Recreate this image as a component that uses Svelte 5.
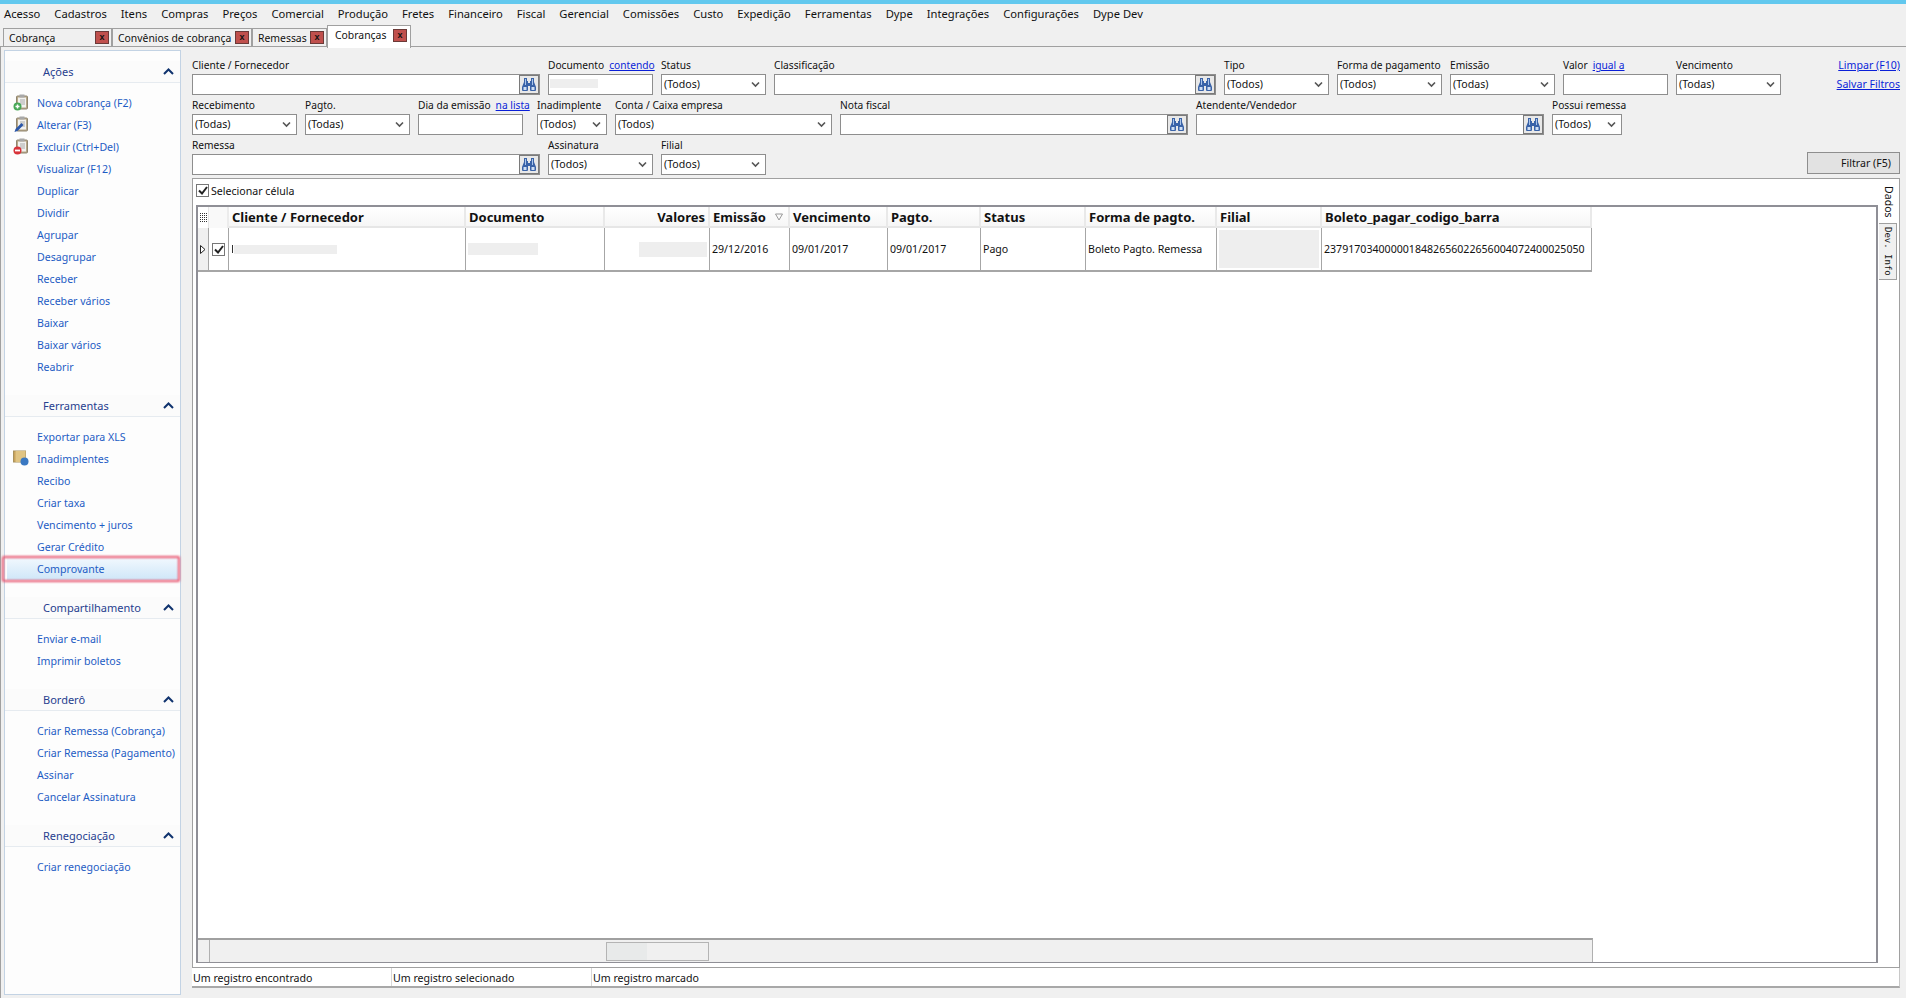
<script>
  const menu = ["Acesso","Cadastros","Itens","Compras","Preços","Comercial","Produção","Fretes","Financeiro","Fiscal","Gerencial","Comissões","Custo","Expedição","Ferramentas","Dype","Integrações","Configurações","Dype Dev"];
  const tabs = [
    { label: "Cobrança", w: 109 },
    { label: "Convênios de cobrança", w: 140 },
    { label: "Remessas", w: 75 },
    { label: "Cobranças", w: 84, active: true },
  ];
  const sections = [
    { title: "Ações", items: [
      { t: "Nova cobrança (F2)", icon: "add" }, { t: "Alterar (F3)", icon: "edit" }, { t: "Excluir (Ctrl+Del)", icon: "del" },
      { t: "Visualizar (F12)" }, { t: "Duplicar" }, { t: "Dividir" }, { t: "Agrupar" }, { t: "Desagrupar" }, { t: "Receber" },
      { t: "Receber vários" }, { t: "Baixar" }, { t: "Baixar vários" }, { t: "Reabrir" } ] },
    { title: "Ferramentas", items: [
      { t: "Exportar para XLS" }, { t: "Inadimplentes", icon: "folder" }, { t: "Recibo" }, { t: "Criar taxa" },
      { t: "Vencimento + juros" }, { t: "Gerar Crédito" }, { t: "Comprovante", hot: true } ] },
    { title: "Compartilhamento", items: [{ t: "Enviar e-mail" }, { t: "Imprimir boletos" }] },
    { title: "Borderô", items: [{ t: "Criar Remessa (Cobrança)" }, { t: "Criar Remessa (Pagamento)" }, { t: "Assinar" }, { t: "Cancelar Assinatura" }] },
    { title: "Renegociação", items: [{ t: "Criar renegociação" }] },
  ];
  const row1 = [
    { label: "Cliente / Fornecedor", w: 348, kind: "search" },
    { label: "Documento", link: "contendo", w: 105, kind: "input", mask: true },
    { label: "Status", w: 105, kind: "select", value: "(Todos)" },
    { label: "Classificação", w: 442, kind: "search" },
    { label: "Tipo", w: 105, kind: "select", value: "(Todos)" },
    { label: "Forma de pagamento", w: 105, kind: "select", value: "(Todos)" },
    { label: "Emissão", w: 105, kind: "select", value: "(Todas)" },
    { label: "Valor", link: "igual a", w: 105, kind: "input" },
    { label: "Vencimento", w: 105, kind: "select", value: "(Todas)" },
  ];
  const row2 = [
    { label: "Recebimento", w: 105, kind: "select", value: "(Todas)" },
    { label: "Pagto.", w: 105, kind: "select", value: "(Todas)" },
    { label: "Dia da emissão", link: "na lista", w: 105, kind: "input" },
    { label: "Inadimplente", w: 70, kind: "select", value: "(Todos)", ml: 6 },
    { label: "Conta / Caixa empresa", w: 217, kind: "select", value: "(Todos)" },
    { label: "Nota fiscal", w: 348, kind: "search" },
    { label: "Atendente/Vendedor", w: 348, kind: "search" },
    { label: "Possui remessa", w: 70, kind: "select", value: "(Todos)" },
  ];
  const row3 = [
    { label: "Remessa", w: 348, kind: "search" },
    { label: "Assinatura", w: 105, kind: "select", value: "(Todos)" },
    { label: "Filial", w: 105, kind: "select", value: "(Todos)" },
  ];
  const columns = [
    { t: "Cliente / Fornecedor", w: 237 }, { t: "Documento", w: 139 }, { t: "Valores", w: 105, right: true },
    { t: "Emissão", w: 80, sort: true }, { t: "Vencimento", w: 98 }, { t: "Pagto.", w: 93 }, { t: "Status", w: 105 },
    { t: "Forma de pagto.", w: 131 }, { t: "Filial", w: 105 }, { t: "Boleto_pagar_codigo_barra", w: 270 },
  ];
  const cells = [
    { name: true }, { mask: "doc" }, { mask: "val" }, { t: "29/12/2016" }, { t: "09/01/2017" }, { t: "09/01/2017" },
    { t: "Pago" }, { t: "Boleto Pagto. Remessa" }, { mask: "fil" }, { t: "2379170340000018482656022656004072400025050" },
  ];
</script>

{#snippet binoculars()}
  <span class="binoc">
    <svg width="16" height="15" viewBox="0 0 16 15">
      <path d="M3 1h3v3h1v2h2V4h1V1h3v4l2 5v3a1 1 0 0 1-1 1h-4a1 1 0 0 1-1-1V9H7v4a1 1 0 0 1-1 1H2a1 1 0 0 1-1-1v-3l2-5z" fill="#3a63a8"/>
      <rect x="2.5" y="10" width="3" height="3" fill="#cfdff4"/>
      <rect x="10.5" y="10" width="3" height="3" fill="#cfdff4"/>
      <rect x="4" y="2" width="1" height="6" fill="#a9c4ea"/>
      <rect x="11" y="2" width="1" height="6" fill="#a9c4ea"/>
    </svg>
  </span>
{/snippet}

{#snippet checkbox()}
  <span class="check">
    <svg width="10" height="9" viewBox="0 0 10 9"><path d="M1 4.5l3 3L9 1" fill="none" stroke="#222" stroke-width="2"/></svg>
  </span>
{/snippet}

{#snippet field(f)}
  <div class="field" style="width:{f.w}px;margin-left:{f.ml ?? 0}px">
    <div class="label"><span>{f.label}</span>{#if f.link}<a href="#top">{f.link}</a>{/if}</div>
    {#if f.kind === "select"}
      <div class="box select">
        <span>{f.value}</span>
        <svg width="9" height="7" viewBox="0 0 9 7"><path d="M1 1.5l3.5 3.5L8 1.5" fill="none" stroke="#555" stroke-width="1.6"/></svg>
      </div>
    {:else if f.kind === "search"}
      <div class="box search">{@render binoculars()}</div>
    {:else}
      <div class="box">{#if f.mask}<span class="mask-doc"></span>{/if}</div>
    {/if}
  </div>
{/snippet}

{#snippet clipboard(kind)}
  <svg class="ico" width="17" height="17" viewBox="0 0 17 17">
    <rect x="3.5" y="2" width="11" height="13" rx="1" fill="#b8a888" stroke="#8f8570"/>
    <rect x="5" y="3.5" width="8" height="10" fill="#f2f2f0"/>
    <rect x="6.5" y="0.5" width="5" height="3" fill="#a8a8a8"/>
    <path d="M7 6h5M7 8h5M7 10h5" stroke="#aaa"/>
    {#if kind === "add"}
      <circle cx="4.5" cy="12.5" r="4" fill="#48a857"/><path d="M2.5 12.5h4M4.5 10.5v4" stroke="#fff" stroke-width="1.5"/>
    {:else if kind === "del"}
      <circle cx="4.5" cy="12.5" r="4" fill="#d8333a"/><path d="M2 12.5h5" stroke="#fff" stroke-width="1.8"/>
    {:else}
      <path d="M1.5 16l1-3 6-6 2 2-6 6z" fill="#2a56a8"/>
    {/if}
  </svg>
{/snippet}

<div class="strip" id="top"></div>
<nav class="menu">
  {#each menu as m}<span>{m}</span>{/each}
</nav>
<div class="tabs">
  {#each tabs as tab}
    <div class="tab" class:active={tab.active} style="width:{tab.w}px">
      <span>{tab.label}</span>
      <b class="close">x</b>
    </div>
  {/each}
</div>

<div class="body">
  <aside class="side">
    {#each sections as s}
      <section>
        <header>
          <span>{s.title}</span>
          <svg width="11" height="7" viewBox="0 0 11 7"><path d="M1 6l4.5-4.5L10 6" fill="none" stroke="#10336e" stroke-width="2"/></svg>
        </header>
        <ul>
          {#each s.items as item}
            <li class:hot={item.hot}>
              {#if item.icon === "folder"}
                <svg class="ico" width="16" height="16" viewBox="0 0 16 16">
                  <rect x="0.5" y="1" width="12" height="11" fill="#c9a35c" stroke="#a8925e"/>
                  <rect x="2.5" y="1" width="10" height="11" fill="#e0c483"/>
                  <circle cx="11.5" cy="11.5" r="4" fill="#3a78c2"/>
                </svg>
              {:else if item.icon}
                {@render clipboard(item.icon)}
              {/if}
              {item.t}
            </li>
          {/each}
        </ul>
      </section>
    {/each}
  </aside>

  <main class="main">
    <div class="row">
      {#each row1 as f}{@render field(f)}{/each}
      <div class="actions"><a href="#top">Limpar (F10)</a><a href="#top">Salvar Filtros</a></div>
    </div>
    <div class="row">
      {#each row2 as f}{@render field(f)}{/each}
    </div>
    <div class="row">
      {#each row3 as f}{@render field(f)}{/each}
      <button class="filter">Filtrar (F5)</button>
    </div>

    <div class="panel">
      <div class="content">
        <div class="selector">{@render checkbox()}<span>Selecionar célula</span></div>
        <div class="grid">
          <div class="table">
            <div class="thead">
              <div class="c-ind head-ind">
                <svg width="7" height="9" viewBox="0 0 7 9"><path d="M0 .5h7M0 2.5h7M0 4.5h7M0 6.5h7M0 8.5h7" stroke="#333" stroke-dasharray="1 1"/></svg>
              </div>
              <div class="c-chk head-chk"></div>
              {#each columns as col}
                <div class="th" class:right={col.right} style="width:{col.w}px">
                  {col.t}
                  {#if col.sort}
                    <svg class="sort" width="8" height="8" viewBox="0 0 8 8"><path d="M.5 1h7L4 7z" fill="none" stroke="#999"/></svg>
                  {/if}
                </div>
              {/each}
            </div>
            <div class="tr">
              <div class="c-ind">
                <svg width="6" height="9" viewBox="0 0 6 9"><path d="M.5.5l4.5 4-4.5 4z" fill="#fff" stroke="#222"/></svg>
              </div>
              <div class="c-chk">{@render checkbox()}</div>
              {#each cells as cell, i}
                <div class="td" style="width:{columns[i].w}px">
                  {#if cell.name}
                    <i class="cut"></i><span class="mask m-name"></span>
                  {:else if cell.mask}
                    <span class="mask m-{cell.mask}"></span>
                  {:else}
                    {cell.t}
                  {/if}
                </div>
              {/each}
            </div>
          </div>
          <div class="hscroll">
            <div class="hs-btn"></div>
            <div class="thumb"></div>
          </div>
        </div>
      </div>
      <div class="vtabs">
        <div class="vtab on">Dados</div>
        <div class="vtab dev">Dev. Info</div>
      </div>
    </div>

    <footer class="status">
      <span>Um registro encontrado</span>
      <span>Um registro selecionado</span>
      <span class="last">Um registro marcado</span>
    </footer>
  </main>
</div>

<style>
  :global(body) {
    margin: 0;
    background: #f0f0f0;
    color: #111;
    font: 10.6px "Noto Sans", "Open Sans", sans-serif;
    overflow: hidden;
  }
  a { color: #0a1fd8; text-decoration: underline; }
  .strip { height: 4px; background: #62c8ee; }
  .menu { display: flex; gap: 14px; height: 18px; margin-bottom: 4px; align-items: center; padding-left: 4px; font-size: 11.2px; }
  .tabs { display: flex; height: 20px; padding-left: 3px; border-bottom: 1px solid #a0a0a0; align-items: flex-end; }
  .tab {
    box-sizing: border-box; height: 18px; display: flex; align-items: center; justify-content: space-between;
    padding: 0 2px 0 5px; border: 1px solid #a0a0a0; border-bottom: 0; font-size: 10.4px; white-space: nowrap;
  }
  .tab.active { height: 23px; margin-bottom: -2px; background: #fff; padding: 0 3px 4px 7px; position: relative; }
  .close {
    box-sizing: border-box; width: 14px; height: 13px; background: #c0504d; border: 1px solid #6b3a38;
    color: #111; font: bold 9px/10px "Liberation Sans", sans-serif; text-align: center;
  }
  .body { display: flex; height: 951px; border-left: 1px solid #a0a0a0; box-sizing: border-box; }
  .side {
    box-sizing: border-box; width: 177px; height: 945px; margin: 3px 0 0 3px; padding-top: 10px;
    background: #fdfdfd; border: 1px solid #c3d3e4; color: #1d5cc4;
  }
  .side header {
    box-sizing: border-box; height: 22px; display: flex; align-items: center; padding-left: 38px;
    position: relative; color: #27408f; background: #fbfbfb; border-bottom: 1px solid #e6ebf0;
    font-size: 11px;
  }
  .side header svg { position: absolute; right: 6px; top: 7px; }
  .side ul { list-style: none; margin: 0; padding: 9px 0 17px; }
  .side li { height: 22px; line-height: 22px; padding-left: 32px; position: relative; white-space: nowrap; }
  .ico { position: absolute; left: 8px; top: 2px; }
  .hot { background: linear-gradient(#f1f8fe, #cfe6f8); margin: 0 2px; padding-left: 30px !important; }
  .hot::after {
    content: ""; position: absolute; inset: -2px -2px -2px -5px;
    border: 2px solid #e8506c; border-radius: 2px; filter: blur(0.8px);
  }
  .main { flex: 1; margin-left: 11px; padding: 11px 6px 0 0; min-width: 0; }
  .row { display: flex; gap: 8px; height: 40px; position: relative; }
  .label { height: 16px; line-height: 15px; font-size: 10.2px; display: flex; gap: 5px; white-space: nowrap; }
  .box {
    box-sizing: border-box; height: 21px; background: #fff; border: 1px solid #8e8e8e; line-height: 19px;
    position: relative;
  }
  .select { display: flex; align-items: center; justify-content: space-between; padding: 0 5px 0 2px; }
  .search { display: flex; justify-content: flex-end; padding: 0; }
  .binoc {
    box-sizing: border-box; width: 20px; height: 19px; background: #e8e8e8; border: 1px solid #7a7a7a;
    display: flex; align-items: center; justify-content: center;
  }
  .mask-doc { position: absolute; left: 1px; top: 4px; width: 48px; height: 9px; background: #eeeeee; }
  .actions { margin-left: auto; display: flex; flex-direction: column; align-items: flex-end; gap: 5px; line-height: 14px; }
  .filter {
    align-self: flex-start; margin: 14px 0 0 auto; box-sizing: border-box; width: 93px; height: 22px;
    background: #e2e2e2; border: 1px solid #8e8e8e; font: inherit; color: #111; text-align: right; padding-right: 8px;
  }
  .panel {
    box-sizing: border-box; height: 790px; background: #fff; border: 1px solid #a0a0a0; display: flex;
  }
  .content { flex: 1; min-width: 0; padding-left: 3px; display: flex; flex-direction: column; }
  .selector { height: 26px; display: flex; align-items: center; gap: 2px; padding-bottom: 3px; box-sizing: border-box; }
  .check {
    box-sizing: border-box; width: 13px; height: 13px; border: 1px solid #777; background: #fff;
    display: inline-flex; align-items: center; justify-content: center;
  }
  .grid {
    flex: 1; display: flex; flex-direction: column; border: 2px solid #8f8f96; border-bottom-width: 1px;
    margin-bottom: 4px; min-height: 0;
  }
  .table { flex: 1; }
  .thead, .tr { display: flex; width: 1394px; }
  .thead { height: 21px; }
  .tr { height: 44px; border-bottom: 2px solid #a6a6a6; box-sizing: border-box; }
  .c-ind { width: 11px; display: flex; align-items: center; justify-content: center; background: #f0f0f0; border-right: 1px solid #a6a6a6; box-sizing: border-box; }
  .head-ind { background: #fff; border-right: 1px solid #e6e6e6; }
  .c-chk { width: 20px; display: flex; align-items: center; justify-content: center; border-right: 1px solid #a6a6a6; box-sizing: border-box; }
  .head-chk { border-right: 2px solid #ececec; background: #f9f9f9; }
  .th {
    box-sizing: border-box; background: linear-gradient(#fff, #f6f6f6); border-right: 2px solid #e9e9e9;
    border-bottom: 2px solid #e6e6e6; padding: 0 3px; font-weight: 700; font-size: 13px; line-height: 20px;
    position: relative; white-space: nowrap;
  }
  .th.right { text-align: right; }
  .sort { position: absolute; right: 5px; top: 6px; }
  .td {
    box-sizing: border-box; border-right: 1px solid #a6a6a6; padding: 0 2px; line-height: 42px; white-space: nowrap;
    display: flex; align-items: center; overflow: hidden;
  }
  .cut { display: block; width: 1px; height: 8px; background: #333; margin-left: 1px; }
  .mask { display: block; background: #eeeeee; }
  .m-name { width: 103px; height: 9px; margin-left: 1px; }
  .m-doc { width: 70px; height: 12px; }
  .m-val { width: 68px; height: 15px; margin-left: 32px; }
  .m-fil { width: 100px; height: 38px; }
  .hscroll {
    box-sizing: border-box; height: 24px; width: 1395px; background: #f0f0f0; border-top: 2px solid #a0a0a0;
    border-right: 1px solid #b0b0b0; display: flex; align-items: center;
  }
  .hs-btn { box-sizing: border-box; width: 12px; height: 100%; border-right: 1px solid #b0b0b0; }
  .thumb {
    box-sizing: border-box; width: 103px; height: 19px; margin-left: 396px; border: 1px solid #b4b4b4;
    background: linear-gradient(90deg, #e8eaea 40%, #f0f0f0 40%);
  }
  .vtabs { width: 20px; padding-top: 2px; margin-left: 1px; }
  .vtab {
    box-sizing: border-box; writing-mode: vertical-rl; width: 19px; display: flex; align-items: center; justify-content: center;
    white-space: nowrap;
  }
  .vtab.on { height: 42px; background: #fff; }
  .vtab.dev {
    height: 57px; background: #f0f0f0; border: 1px solid #a0a0a0; border-left: 0; width: 18px; font-family: "DejaVu Sans Mono", monospace; font-size: 9px;
  }
  .status {
    box-sizing: border-box; height: 20px; display: flex; background: #fff; border: 1px solid #a8a8a8; border-top: 0;
    border-left: 0; border-right-color: #c8c8c8; line-height: 20px; border-bottom-width: 2px;
  }
  .status span { width: 200px; height: 18px; box-sizing: border-box; border-right: 1px solid #d8d8d8; padding: 1px 0 0 1px; line-height: 18px; }
  .status .last { border-right: 0; }
</style>
